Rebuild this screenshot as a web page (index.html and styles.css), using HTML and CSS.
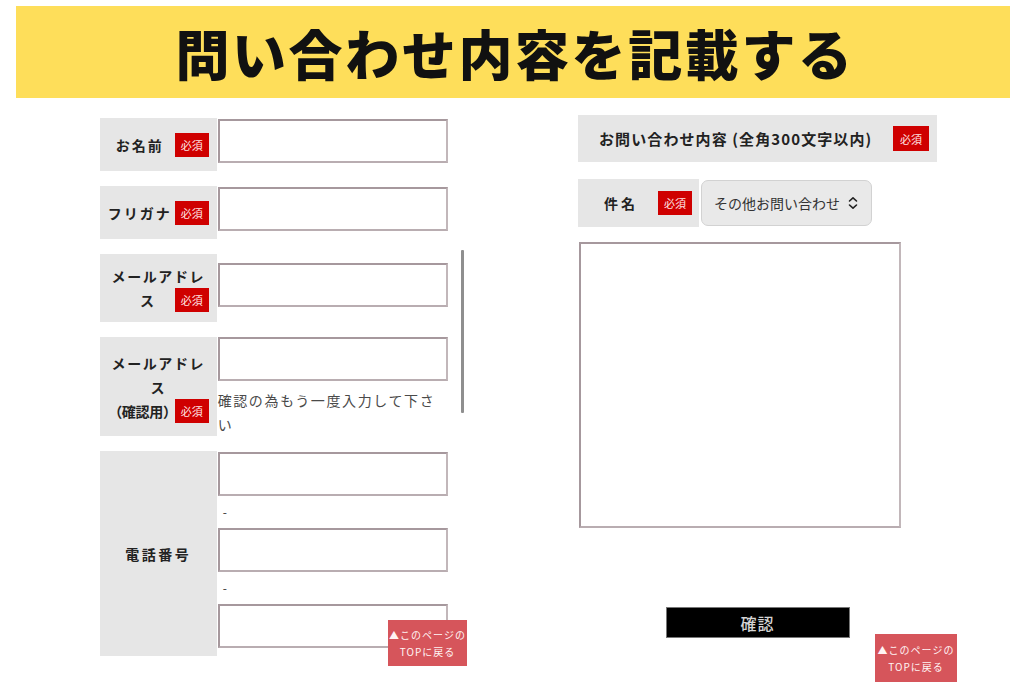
FILE: index.html
```html
<!DOCTYPE html>
<html lang="ja">
<head>
<meta charset="utf-8">
<title>お問い合わせ</title>
<link rel="stylesheet" href="styles.css">
</head>
<body>
<header class="hero"><h1>問い合わせ内容を記載する</h1></header>
<main class="main">
  <section class="left">
    <div class="form">
      <div class="row">
        <div class="lbl"><span class="lt">お名前</span><span class="badge">必須</span></div>
        <div class="val"><div class="inp"></div></div>
      </div>
      <div class="row">
        <div class="lbl"><span class="lt">フリガナ</span><span class="badge">必須</span></div>
        <div class="val"><div class="inp"></div></div>
      </div>
      <div class="row">
        <div class="lbl multi">
          <div class="ln">メールアドレ</div>
          <div class="ln lb"><span class="su">ス</span><span class="badge">必須</span></div>
        </div>
        <div class="val"><div class="inp"></div></div>
      </div>
      <div class="row">
        <div class="lbl multi">
          <div class="ln">メールアドレ</div>
          <div class="ln">ス</div>
          <div class="ln lb"><span class="paren">（確認用）</span><span class="badge">必須</span></div>
        </div>
        <div class="val val-note"><div class="inp"></div><p class="note">確認の為もう一度入力して下さい</p></div>
      </div>
      <div class="row">
        <div class="lbl tel"><span class="lt">電話番号</span></div>
        <div class="val">
          <div class="inp"></div>
          <div class="dash">-</div>
          <div class="inp"></div>
          <div class="dash">-</div>
          <div class="inp"></div>
        </div>
      </div>
    </div>
    <div class="scroll"></div>
    <a class="totop totop-l">▲このページの<br>TOPに戻る</a>
  </section>
  <section class="right">
    <div class="rhead"><span class="rt">お問い合わせ内容 (全角300文字以内)</span><span class="badge badge-r">必須</span></div>
    <div class="subj">
      <div class="slbl"><span class="st">件名</span><span class="badge">必須</span></div>
      <div class="select"><span>その他お問い合わせ</span>
        <svg class="chev" width="10" height="14" viewBox="0 0 10 14"><path d="M1.5 5 L5 1.8 L8.5 5 M1.5 9 L5 12.2 L8.5 9" fill="none" stroke="#222" stroke-width="1.6" stroke-linecap="round" stroke-linejoin="round"/></svg>
      </div>
    </div>
    <div class="textarea"></div>
    <div class="btnwrap"><button class="confirm">確認</button></div>
  </section>
  <a class="totop totop-r">▲このページの<br>TOPに戻る</a>
</main>
</body>
</html>
```
FILE: styles.css
```css
html, body { margin: 0; padding: 0; background: #fff; }
body {
  font-family: "Noto Sans CJK JP", "Noto Sans", sans-serif;
  color: #222;
  width: 1024px;
  height: 683px;
  overflow: hidden;
}
.hero {
  margin: 6px 14px 0 16px;
  height: 92px;
  background: #fede5a;
  display: flex;
  align-items: center;
  justify-content: center;
}
.hero h1 {
  margin: 0;
  font-size: 54px;
  font-weight: 900;
  letter-spacing: 2.6px;
  color: #111;
  line-height: 1;
  padding: 2px 0 0 4px;
}
.main {
  position: relative;
  display: flex;
  padding-left: 100px;
  height: 585px;
}
.left {
  position: relative;
  display: flex;
  flex: none;
  width: 478px;
  padding-top: 20px;
  box-sizing: border-box;
}
.form {
  width: 348px;
  flex: none;
  display: flex;
  flex-direction: column;
  gap: 15px;
}
.row { display: flex; }
.lbl {
  width: 117px;
  box-sizing: border-box;
  background: #e6e6e6;
  display: flex;
  align-items: center;
  padding: 8px 8px 8px 5px;
  font-size: 14px;
  font-weight: 700;
  letter-spacing: 2px;
}
.lt { flex: 1; text-align: center; white-space: nowrap; }
.badge {
  width: 34px;
  height: 24px;
  background: #cf0000;
  color: #ffe4e4;
  font-size: 11px;
  font-weight: 400;
  letter-spacing: 0;
  display: flex;
  align-items: center;
  justify-content: center;
  flex: none;
}
.lbl.multi {
  flex-direction: column;
  justify-content: center;
  align-items: stretch;
  padding: 10px 8px 10px 0;
  letter-spacing: 1.6px;
}
.ln { height: 24px; line-height: 24px; text-align: center; padding-left: 8px; white-space: nowrap; }
.ln.lb { display: flex; justify-content: flex-end; align-items: center; padding-left: 0; }
.su { margin-right: 19px; }
.paren { letter-spacing: -0.3px; margin-right: -2px; }
.lbl.tel { justify-content: center; padding: 0; letter-spacing: 2.5px; }
.val {
  width: 231px;
  display: flex;
  flex-direction: column;
  justify-content: center;
  padding: 1px 0 8px 1px;
}
.val-note { padding: 0 0 0 1px; justify-content: flex-start; }
.inp {
  height: 44px;
  box-sizing: border-box;
  width: 230px;
  background: #fff;
  border-style: solid;
  border-width: 2px;
  border-color: #a6989d #c2b7ba #b9adb1 #a6989d;
}
.note {
  margin: 7px 0 0 0;
  font-size: 14px;
  line-height: 24px;
  letter-spacing: 1.6px;
  color: #4a4a4a;
}
.dash {
  height: 32px;
  font-size: 12px;
  line-height: 32px;
  padding-left: 5px;
  color: #333;
}
.scroll {
  width: 3px;
  height: 163px;
  margin: 132px 0 0 13px;
  background: #8f8f8f;
  border-radius: 1px;
}
.totop {
  position: absolute;
  background: #d6555b;
  color: #fff3f3;
  font-size: 10px;
  line-height: 17px;
  letter-spacing: 1px;
  text-align: center;
  display: flex;
  align-items: center;
  justify-content: center;
  box-sizing: border-box;
}
.totop-l { left: 288px; top: 522px; width: 79px; height: 46px; }
.totop-r { left: 875px; top: 536px; width: 82px; height: 48px; }
.right {
  flex: none;
  padding-top: 17px;
  width: 360px;
}
.rhead {
  width: 359px;
  height: 47px;
  box-sizing: border-box;
  background: #e6e6e6;
  display: flex;
  align-items: center;
  padding: 0 8px 0 21px;
  font-size: 15px;
  font-weight: 700;
  letter-spacing: 1.1px;
}
.rt { flex: 1; white-space: nowrap; }
.badge-r { width: 36px; height: 25px; }
.subj {
  display: flex;
  margin-top: 17px;
  height: 48px;
  align-items: stretch;
}
.slbl {
  width: 121px;
  box-sizing: border-box;
  background: #e6e6e6;
  display: flex;
  align-items: center;
  padding: 0 7px 0 26px;
  font-size: 14px;
  font-weight: 700;
  letter-spacing: 3px;
}
.st { flex: 1; }
.select {
  margin: 1px 0 1px 2px;
  width: 171px;
  box-sizing: border-box;
  background: #e9e9e9;
  border: 1px solid #d2d2d2;
  border-radius: 7px;
  display: flex;
  align-items: center;
  padding: 0 13px 0 12px;
  font-size: 14px;
  color: #333;
  letter-spacing: 0;
  justify-content: space-between;
}
.chev { flex: none; }
.textarea {
  margin: 15px 0 0 1px;
  width: 322px;
  height: 286px;
  box-sizing: border-box;
  border-style: solid;
  border-width: 2px;
  border-color: #a6989d #c2b7ba #b9adb1 #a6989d;
}
.btnwrap {
  margin-top: 79px;
  display: flex;
  justify-content: center;
  width: 359px;
}
.confirm {
  width: 184px;
  height: 31px;
  background: #000;
  border: 1px solid #777;
  color: #d4d4d4;
  font-family: "Noto Sans CJK JP", sans-serif;
  font-size: 16px;
  font-weight: 500;
  letter-spacing: 1px;
  padding: 0;
}
```
